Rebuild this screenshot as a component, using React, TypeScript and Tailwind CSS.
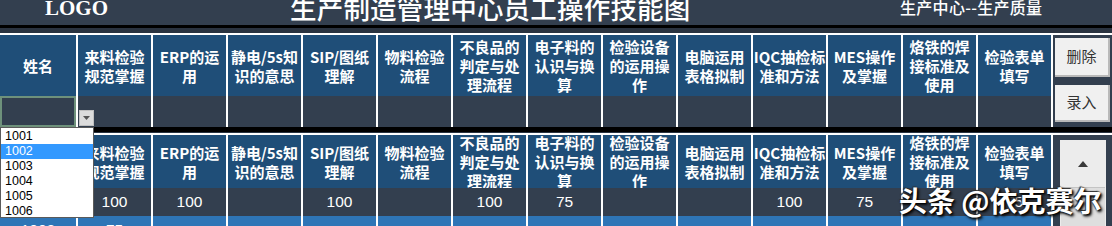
import React from 'react';

const skills: string[][] = [
    ['来料检验', '规范掌握'],
    ['ERP的运', '用'],
    ['静电/5s知', '识的意思'],
    ['SIP/图纸', '理解'],
    ['物料检验', '流程'],
    ['不良品的', '判定与处', '理流程'],
    ['电子料的', '认识与换', '算'],
    ['检验设备', '的运用操', '作'],
    ['电脑运用', '表格拟制'],
    ['IQC抽检标', '准和方法'],
    ['MES操作', '及掌握'],
    ['烙铁的焊', '接标准及', '使用'],
    ['检验表单', '填写'],
];

const scores = ['100', '100', '', '100', '', '100', '75', '', '', '100', '75', '', '75'];
const nextScores = ['75', '', '', '', '', '', '', '', '', '', '', '', ''];
const ids = ['1001', '1002', '1003', '1004', '1005', '1006'];

const cjk = "font-['Noto_Sans_CJK_SC',sans-serif]";
const num = "font-['Liberation_Sans',Arial,sans-serif]";

function HeaderRow({ height }: { height: string }) {
    return (
        <div className={`flex ${height} bg-[#1f4e78] text-white ${cjk} font-bold text-[15px] leading-[19px]`}>
            <div className="w-[76px] flex items-center justify-center overflow-hidden">姓名</div>
            {skills.map((lines, i) => (
                <div
                    key={i}
                    className="w-[75px] border-l-2 border-white flex flex-col items-center justify-center overflow-hidden text-center"
                >
                    {lines.map((l) => (
                        <div key={l} className="whitespace-nowrap">{l}</div>
                    ))}
                </div>
            ))}
        </div>
    );
}

function DataRow({ first, values, height, bg }: { first: string; values: string[]; height: string; bg: string }) {
    return (
        <div className={`flex ${height} ${bg} text-white ${num} text-[15.5px]`}>
            <div className="w-[76px] flex items-center justify-center">{first}</div>
            {values.map((v, i) => (
                <div key={i} className="w-[75px] border-l-2 border-white flex items-center justify-center">
                    {v}
                </div>
            ))}
        </div>
    );
}

export default function App() {
    return (
        <div className="relative w-[1112px] h-[226px] overflow-hidden bg-[#333f4f]">
            {/* title bar */}
            <div className="h-[25px] flex items-start overflow-hidden text-white">
                <div className="ml-[45px] w-[245px] -mt-[4px] font-['Liberation_Serif',serif] font-bold text-[21px] leading-[24px]">
                    LOGO
                </div>
                <div className={`w-[610px] -mt-[7px] ${cjk} font-medium text-[26.5px] leading-[30px] tracking-[0.2px]`}>
                    生产制造管理中心员工操作技能图
                </div>
                <div className={`-mt-[3px] ${cjk} font-medium text-[16px] leading-[20px] tracking-[0.3px]`}>生产中心--生产质量</div>
            </div>
            <div className="h-[3px] bg-black" />
            <div className="h-[5px] bg-[#2a3340]" />
            <div className="h-[2px] bg-white" />

            {/* upper entry block */}
            <div className="flex h-[92px]">
                <div className="w-[1051px] flex flex-col">
                    <HeaderRow height="h-[61px]" />
                    <div className="flex h-[31px] bg-[#333f4f]">
                        <div className="w-[76px] border-2 border-[#6e917b]" />
                        {skills.map((_, i) => (
                            <div key={i} className="w-[75px] border-l-2 border-white" />
                        ))}
                    </div>
                </div>
                <div className="flex-1 border-l-2 border-white flex flex-col px-[2px] pt-[3px] gap-[8px]">
                    <button className={`h-[39px] bg-[#f0f0f0] border-b-2 border-r-2 border-[#b9b9b9] text-[#333] ${cjk} text-[15px]`}>
                        删除
                    </button>
                    <button className={`h-[37px] bg-[#f0f0f0] border-b-2 border-r-2 border-[#b9b9b9] text-[#333] ${cjk} text-[15px]`}>
                        录入
                    </button>
                </div>
            </div>

            <div className="h-[5px] bg-black" />
            <div className="h-[1px] bg-[#2a3340]" />
            <div className="h-[2px] bg-white" />

            {/* lower record list */}
            <div className="flex">
                <div className="w-[1051px] flex flex-col">
                    <HeaderRow height="h-[53px]" />
                    <DataRow first="1001" values={scores} height="h-[28px]" bg="bg-[#333f4f]" />
                    <DataRow first="1002" values={nextScores} height="h-[28px]" bg="bg-[#2e75b6]" />
                </div>
                <div className="flex-1 border-l-2 border-white pl-[7px] pr-[6px] pt-[5px]">
                    <div className="flex flex-col bg-[#ececec]">
                        <div className="h-[47px] flex items-center justify-center">
                            <svg width="10" height="6" viewBox="0 0 10 6">
                                <path d="M5 0 L10 6 L0 6 Z" fill="#3a3a3a" />
                            </svg>
                        </div>
                        <div className="h-[50px] mx-[1px] bg-[#dedede] border-t border-[#c4c4c4]" />
                    </div>
                </div>
            </div>

            {/* validation dropdown arrow */}
            <div className="absolute left-[79px] top-[110px] w-[15px] h-[16px] bg-[#dcdcdc] border border-[#c0c0c0] flex items-center justify-center">
                <svg width="7" height="4" viewBox="0 0 7 4">
                    <path d="M0 0 L7 0 L3.5 4 Z" fill="#555" />
                </svg>
            </div>

            {/* validation dropdown list */}
            <div className={`absolute left-0 top-[127px] w-[94px] h-[91px] bg-white border border-[#5a5a5a] ${num} text-[12.5px] text-black pt-[1px]`}>
                {ids.map((id, i) => (
                    <div
                        key={id}
                        className={`h-[15px] leading-[15px] pl-[4px] ${i === 1 ? 'bg-[#3399ff] text-white' : ''}`}
                    >
                        {id}
                    </div>
                ))}
            </div>

            {/* watermark */}
            <div
                className={`absolute left-[899px] top-[184px] text-white ${cjk} font-bold text-[28px] leading-[33px] whitespace-nowrap [text-shadow:1px_1px_2px_#000,2px_2px_3px_#111,-1px_-1px_1px_#333]`}
            >
                头条 @依克赛尔
            </div>
        </div>
    );
}
